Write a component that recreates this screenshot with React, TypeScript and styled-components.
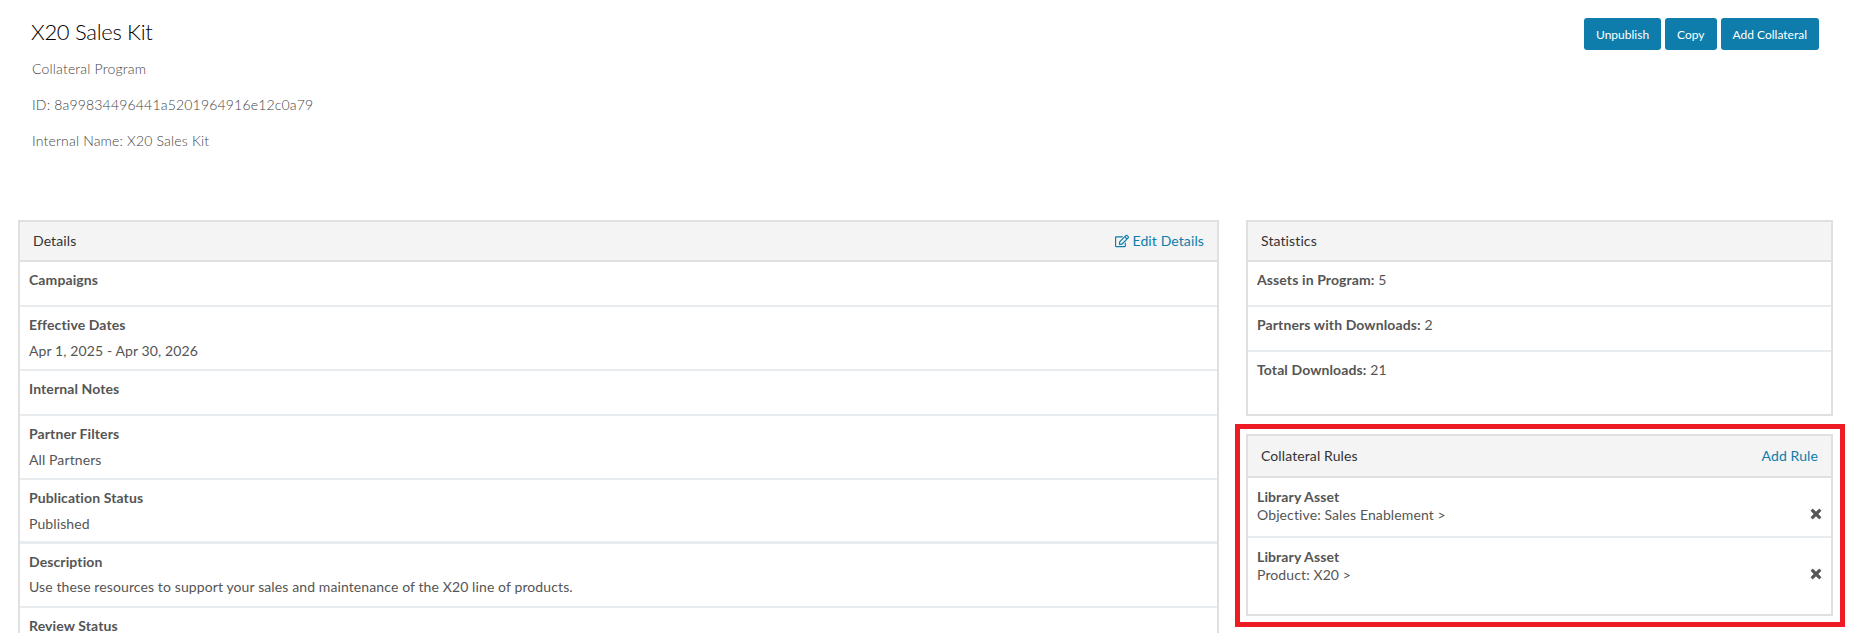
import React from 'react'
import styled, { createGlobalStyle } from 'styled-components'
import { FaRegEdit, FaTimes } from 'react-icons/fa'

const GlobalStyle = createGlobalStyle`
  html, body {
    margin: 0;
    height: 100%;
    overflow: hidden;
    background: #fff;
  }
  body {
    font-family: Lato, "Open Sans", sans-serif;
    font-size: 14px;
    line-height: 20px;
    letter-spacing: 0.11px;
    color: #555;
  }
`

const Page = styled.div`
  width: 1860px;
`

const Header = styled.header`
  display: flex;
  justify-content: space-between;
  align-items: flex-start;
  box-sizing: border-box;
  height: 220px;
  padding: 18px 41px 0 31px;
`

const Title = styled.h1`
  margin: 1px 0 14px;
  font-size: 22px;
  font-weight: 300;
  line-height: 26px;
  letter-spacing: -0.3px;
  color: #000;
`

const Meta = styled.p`
  margin: 0 0 16px 1px;
  font-weight: 300;
  letter-spacing: 0.18px;
  color: #444;
`

const Actions = styled.div`
  display: flex;
  gap: 4px;
`

const Button = styled.button`
  height: 32px;
  padding: 0 12px;
  border: 0;
  border-radius: 3px;
  background: #0e7dab;
  color: #fff;
  font-family: inherit;
  font-size: 12px;
`

const Columns = styled.div`
  display: grid;
  grid-template-columns: 1201px 587px;
  gap: 27px;
  padding-left: 18px;
  align-items: start;
`

const Side = styled.div`
  display: flex;
  flex-direction: column;
  gap: 18px;
`

const Panel = styled.section<{ $pad?: number; $flagged?: boolean }>`
  position: relative;
  box-sizing: border-box;
  border: 2px solid #e0e0e0;
  padding-bottom: ${p => p.$pad ?? 0}px;

  ${p => p.$flagged && `
    &::after {
      content: "";
      position: absolute;
      inset: -12px -14px -13px -13px;
      border: 5px solid #ed1c24;
      pointer-events: none;
    }
  `}
`

const PanelHead = styled.div<{ $tall?: boolean }>`
  display: flex;
  justify-content: space-between;
  align-items: center;
  box-sizing: border-box;
  height: ${p => (p.$tall ? 42 : 40)}px;
  padding: 0 13px;
  background: #f4f4f4;
  border-bottom: 2px solid #e0e0e0;
  color: #333;
`

const HeadLink = styled.a`
  display: flex;
  align-items: center;
  gap: 3px;
  color: #0e7dab;
`

const Row = styled.div<{ $thick?: boolean }>`
  box-sizing: border-box;
  min-height: 45px;
  padding: 8px 9px ${p => (p.$thick ? 7 : 8)}px;
  border-bottom: ${p => (p.$thick ? 3 : 2)}px solid #e8ecee;

  &:last-child {
    border-bottom: 0;
  }
`

const Label = styled.div`
  font-weight: 700;
  color: #555;
`

const Value = styled.div<{ $tight?: boolean }>`
  margin: ${p => (p.$tight ? '5px 0 1px' : '6px 0 0')};
`

const Stat = styled.span`
  font-weight: 700;
`

const RuleRow = styled.div<{ $last?: boolean }>`
  display: flex;
  justify-content: space-between;
  align-items: flex-start;
  box-sizing: border-box;
  height: ${p => (p.$last ? 76 : 60)}px;
  padding: 10px 8px 10px 9px;
  border-bottom: ${p => (p.$last ? 0 : 2)}px solid #e8ecee;
  line-height: 18px;
`

const RemoveIcon = styled(FaTimes)`
  margin-top: 19px;
  font-size: 14px;
  color: #555;
  stroke: currentColor;
  stroke-width: 30;
`

const details = [
  { label: 'Campaigns' },
  { label: 'Effective Dates', value: 'Apr 1, 2025 - Apr 30, 2026' },
  { label: 'Internal Notes' },
  { label: 'Partner Filters', value: 'All Partners' },
  { label: 'Publication Status', value: 'Published', thick: true },
  { label: 'Description', value: 'Use these resources to support your sales and maintenance of the X20 line of products.', tight: true },
  { label: 'Review Status' },
]

const stats = [
  ['Assets in Program:', '5'],
  ['Partners with Downloads:', '2'],
  ['Total Downloads:', '21'],
]

const rules = ['Objective: Sales Enablement >', 'Product: X20 >']

export default function App() {
  return (
    <Page>
      <GlobalStyle />
      <Header>
        <div>
          <Title>X20 Sales Kit</Title>
          <Meta>Collateral Program</Meta>
          <Meta>ID: 8a99834496441a5201964916e12c0a79</Meta>
          <Meta>Internal Name: X20 Sales Kit</Meta>
        </div>
        <Actions>
          <Button>Unpublish</Button>
          <Button>Copy</Button>
          <Button>Add Collateral</Button>
        </Actions>
      </Header>
      <Columns>
        <Panel>
          <PanelHead>
            Details
            <HeadLink><FaRegEdit size={14} /> Edit Details</HeadLink>
          </PanelHead>
          {details.map(d => (
            <Row key={d.label} $thick={d.thick}>
              <Label>{d.label}</Label>
              {d.value && <Value $tight={d.tight}>{d.value}</Value>}
            </Row>
          ))}
        </Panel>
        <Side>
          <Panel $pad={17}>
            <PanelHead>Statistics</PanelHead>
            {stats.map(([name, count]) => (
              <Row key={name}>
                <Stat>{name}</Stat> {count}
              </Row>
            ))}
          </Panel>
          <Panel $flagged>
            <PanelHead $tall>
              Collateral Rules
              <HeadLink>Add Rule</HeadLink>
            </PanelHead>
            {rules.map((r, i) => (
              <RuleRow key={r} $last={i === rules.length - 1}>
                <div>
                  <Label>Library Asset</Label>
                  {r}
                </div>
                <RemoveIcon />
              </RuleRow>
            ))}
          </Panel>
        </Side>
      </Columns>
    </Page>
  )
}
